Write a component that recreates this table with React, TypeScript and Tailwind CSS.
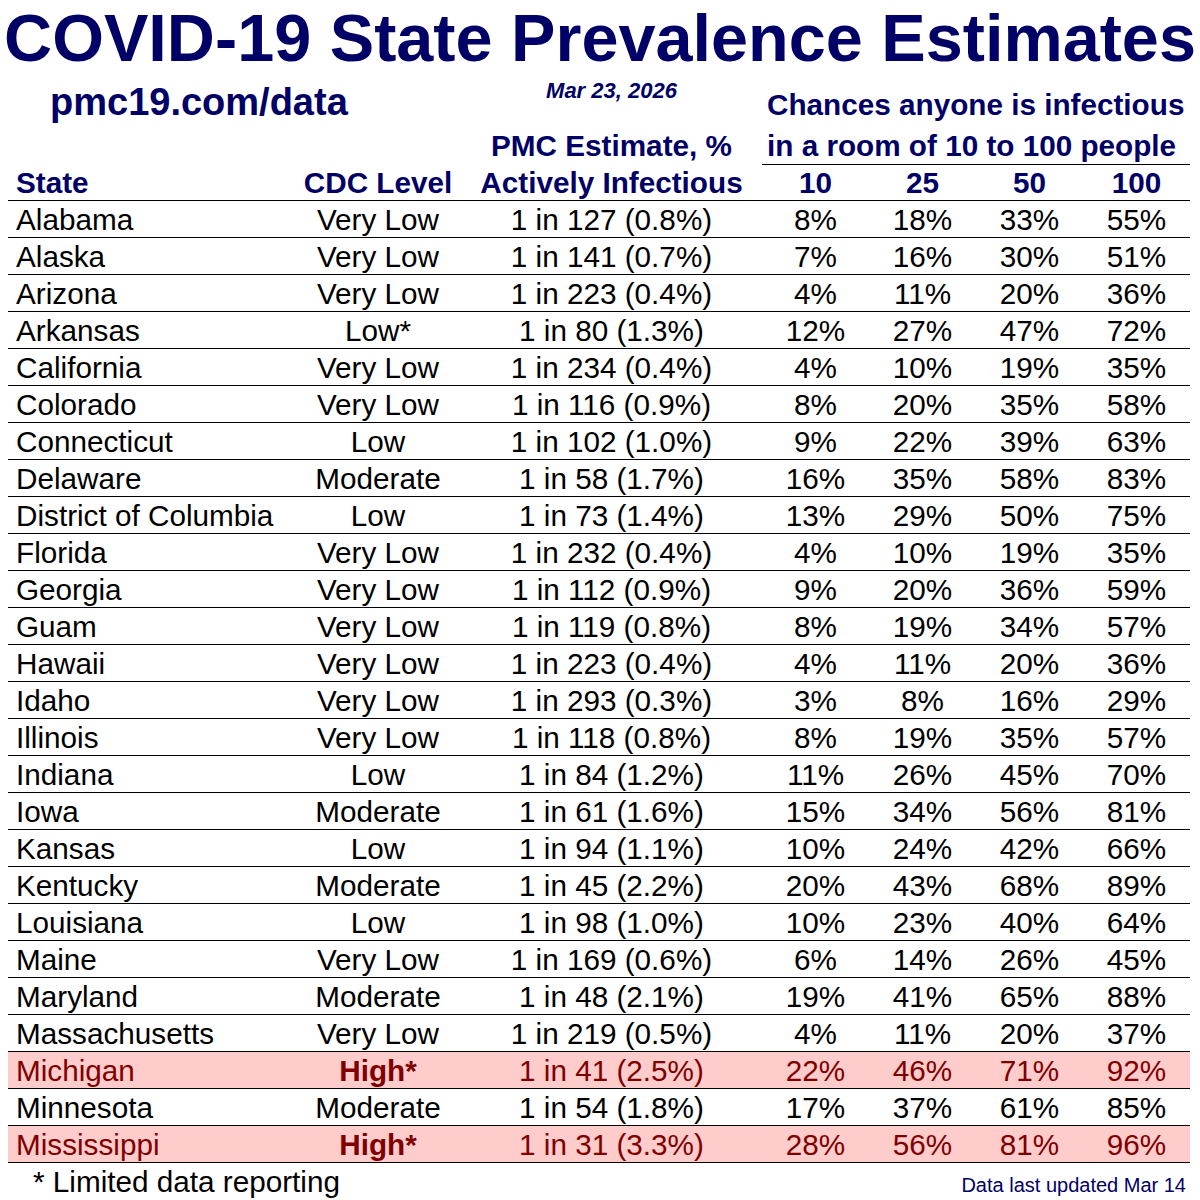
import React from "react";

type Row = {
  state: string;
  level: string;
  est: string;
  p: [number, number, number, number];
  high?: boolean;
};

const ROWS: Row[] = [
  { state: "Alabama", level: "Very Low", est: "1 in 127 (0.8%)", p: [8, 18, 33, 55] },
  { state: "Alaska", level: "Very Low", est: "1 in 141 (0.7%)", p: [7, 16, 30, 51] },
  { state: "Arizona", level: "Very Low", est: "1 in 223 (0.4%)", p: [4, 11, 20, 36] },
  { state: "Arkansas", level: "Low*", est: "1 in 80 (1.3%)", p: [12, 27, 47, 72] },
  { state: "California", level: "Very Low", est: "1 in 234 (0.4%)", p: [4, 10, 19, 35] },
  { state: "Colorado", level: "Very Low", est: "1 in 116 (0.9%)", p: [8, 20, 35, 58] },
  { state: "Connecticut", level: "Low", est: "1 in 102 (1.0%)", p: [9, 22, 39, 63] },
  { state: "Delaware", level: "Moderate", est: "1 in 58 (1.7%)", p: [16, 35, 58, 83] },
  { state: "District of Columbia", level: "Low", est: "1 in 73 (1.4%)", p: [13, 29, 50, 75] },
  { state: "Florida", level: "Very Low", est: "1 in 232 (0.4%)", p: [4, 10, 19, 35] },
  { state: "Georgia", level: "Very Low", est: "1 in 112 (0.9%)", p: [9, 20, 36, 59] },
  { state: "Guam", level: "Very Low", est: "1 in 119 (0.8%)", p: [8, 19, 34, 57] },
  { state: "Hawaii", level: "Very Low", est: "1 in 223 (0.4%)", p: [4, 11, 20, 36] },
  { state: "Idaho", level: "Very Low", est: "1 in 293 (0.3%)", p: [3, 8, 16, 29] },
  { state: "Illinois", level: "Very Low", est: "1 in 118 (0.8%)", p: [8, 19, 35, 57] },
  { state: "Indiana", level: "Low", est: "1 in 84 (1.2%)", p: [11, 26, 45, 70] },
  { state: "Iowa", level: "Moderate", est: "1 in 61 (1.6%)", p: [15, 34, 56, 81] },
  { state: "Kansas", level: "Low", est: "1 in 94 (1.1%)", p: [10, 24, 42, 66] },
  { state: "Kentucky", level: "Moderate", est: "1 in 45 (2.2%)", p: [20, 43, 68, 89] },
  { state: "Louisiana", level: "Low", est: "1 in 98 (1.0%)", p: [10, 23, 40, 64] },
  { state: "Maine", level: "Very Low", est: "1 in 169 (0.6%)", p: [6, 14, 26, 45] },
  { state: "Maryland", level: "Moderate", est: "1 in 48 (2.1%)", p: [19, 41, 65, 88] },
  { state: "Massachusetts", level: "Very Low", est: "1 in 219 (0.5%)", p: [4, 11, 20, 37] },
  { state: "Michigan", level: "High*", est: "1 in 41 (2.5%)", p: [22, 46, 71, 92], high: true },
  { state: "Minnesota", level: "Moderate", est: "1 in 54 (1.8%)", p: [17, 37, 61, 85] },
  { state: "Mississippi", level: "High*", est: "1 in 31 (3.3%)", p: [28, 56, 81, 96], high: true },
];

// column widths: state | cdc | pmc | 10 | 25 | 50 | 100
const GRID = "grid grid-cols-[287px_166px_301px_107px_107px_107px_107px]";

export default function App() {
  return (
    <div className="w-[1200px] h-[1200px] bg-white overflow-hidden font-['Liberation_Sans',Arial,sans-serif]">
      {/* title */}
      <div className="h-[76px] text-center text-[66.6px] leading-[76px] font-bold text-[#000066] whitespace-nowrap">
        COVID-19 State Prevalence Estimates
      </div>

      <div className="ml-[8px] w-[1182px]">
        {/* site / date / room caption */}
        <div className={`${GRID} h-[51px] items-start text-[#000066] font-bold`}>
          <div className="col-span-2 pl-[42px] mt-[6px] text-[38px] leading-[40px]">pmc19.com/data</div>
          <div className="mt-[3px] text-center text-[22px] leading-[24px] italic">Mar 23, 2026</div>
          <div className="col-span-4 pl-[5px] mt-[10px] text-[29.7px] leading-[38px] whitespace-nowrap">
            Chances anyone is infectious
          </div>
        </div>

        <div className={`${GRID} h-[37px] text-[#000066] font-bold text-[29.7px] leading-[37px]`}>
          <div className="col-span-2" />
          <div className="text-center whitespace-nowrap">PMC Estimate, %</div>
          <div className="col-span-4 pl-[5px] border-b border-black whitespace-nowrap">
            in a room of 10 to 100 people
          </div>
        </div>

        {/* column headers */}
        <div className={`${GRID} h-[37px] border-b border-black text-[#000066] font-bold text-[29.7px] leading-[37px] text-center whitespace-nowrap`}>
          <div className="text-left pl-[8px]">State</div>
          <div>CDC Level</div>
          <div>Actively Infectious</div>
          <div>10</div>
          <div>25</div>
          <div>50</div>
          <div>100</div>
        </div>

        {ROWS.map((r) => (
          <div
            key={r.state}
            className={`${GRID} h-[37px] border-b border-black text-[29.7px] leading-[38px] text-center whitespace-nowrap ${
              r.high ? "bg-[#ffcccc] text-[#800000]" : "text-black"
            }`}
          >
            <div className="text-left pl-[8px]">{r.state}</div>
            <div className={r.high ? "font-bold" : ""}>{r.level}</div>
            <div>{r.est}</div>
            {r.p.map((v, i) => (
              <div key={i}>{v}%</div>
            ))}
          </div>
        ))}

        {/* footer */}
        <div className="flex items-baseline justify-between h-[37px] leading-[38px]">
          <div className="pl-[25px] text-[29.7px] text-black">* Limited data reporting</div>
          <div className="pr-[4px] text-[20px] text-[#000066]">Data last updated Mar 14</div>
        </div>
      </div>
    </div>
  );
}
